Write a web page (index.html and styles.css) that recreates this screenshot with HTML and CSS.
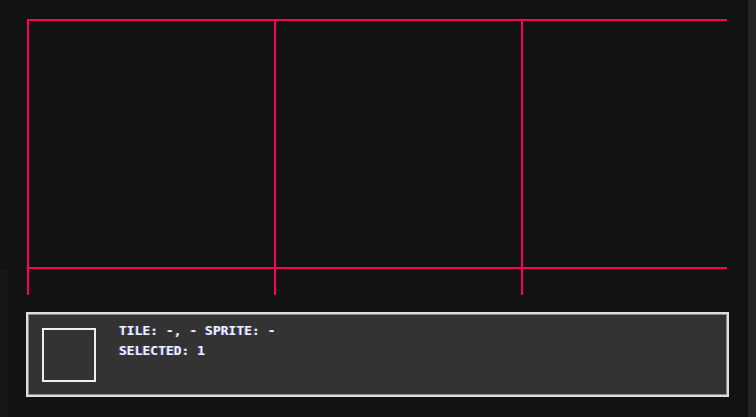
FILE: index.html
```html
<!DOCTYPE html>
<html lang="en">

<head>
  <meta charset="UTF-8" />
  <meta name="viewport" content="width=device-width, initial-scale=1.0" />
  <title>Tile Picker</title>
  <link rel="stylesheet" href="styles.css">
</head>

<body>
  <div class="edge"></div>

  <div class="main">
    <div class="tile-view">
      <div class="tile-grid">
        <div class="cell"></div>
        <div class="cell"></div>
        <div class="cell"></div>
        <div class="cell"></div>
        <div class="cell"></div>
        <div class="cell"></div>
      </div>
    </div>

    <div class="info-panel">
      <div class="preview"></div>
      <div class="info-text">
        <div>TILE: -, - SPRITE: -</div>
        <div>SELECTED: 1</div>
      </div>
    </div>
  </div>

  <div class="scroll-strip"></div>
</body>

</html>
```

FILE: styles.css
```css
html,
body {
  margin: 0;
  height: 100%;
}

body {
  display: flex;
  background: #121212;
  overflow: hidden;
  font-family: 'DejaVu Sans Mono', monospace;
}

.edge {
  width: 8px;
  flex-shrink: 0;
  background: linear-gradient(to bottom, transparent 270px, #171717 270px);
}

.main {
  flex: 1;
  padding: 19px 0 0 19px;
}

.tile-view {
  width: 700px;
  height: 276px;
  overflow: hidden;
}

.tile-grid {
  display: grid;
  grid-template-columns: repeat(3, 247px);
  grid-auto-rows: 248px;
}

.cell {
  box-sizing: border-box;
  border-top: 2px solid #ff0058;
  border-left: 2px solid #ff0058;
}

.info-panel {
  display: flex;
  align-items: flex-start;
  gap: 23px;
  box-sizing: border-box;
  width: 703px;
  height: 85px;
  margin: 17px 0 0 -1px;
  padding: 14px;
  background: #333333;
  border: 2px solid #dedede;
  box-shadow: 0 0 0 1px #8a8a8a inset;
}

.preview {
  width: 54px;
  height: 54px;
  box-sizing: border-box;
  border: 2px solid #eeeeee;
  flex-shrink: 0;
}

.info-text {
  margin-top: -7px;
  color: #f2f2f2;
  font-size: 13px;
  font-weight: bold;
  line-height: 20px;
  text-shadow: -1px 0 #5a5ad8;
}

.scroll-strip {
  width: 8px;
  flex-shrink: 0;
  background: #242424;
}
```
